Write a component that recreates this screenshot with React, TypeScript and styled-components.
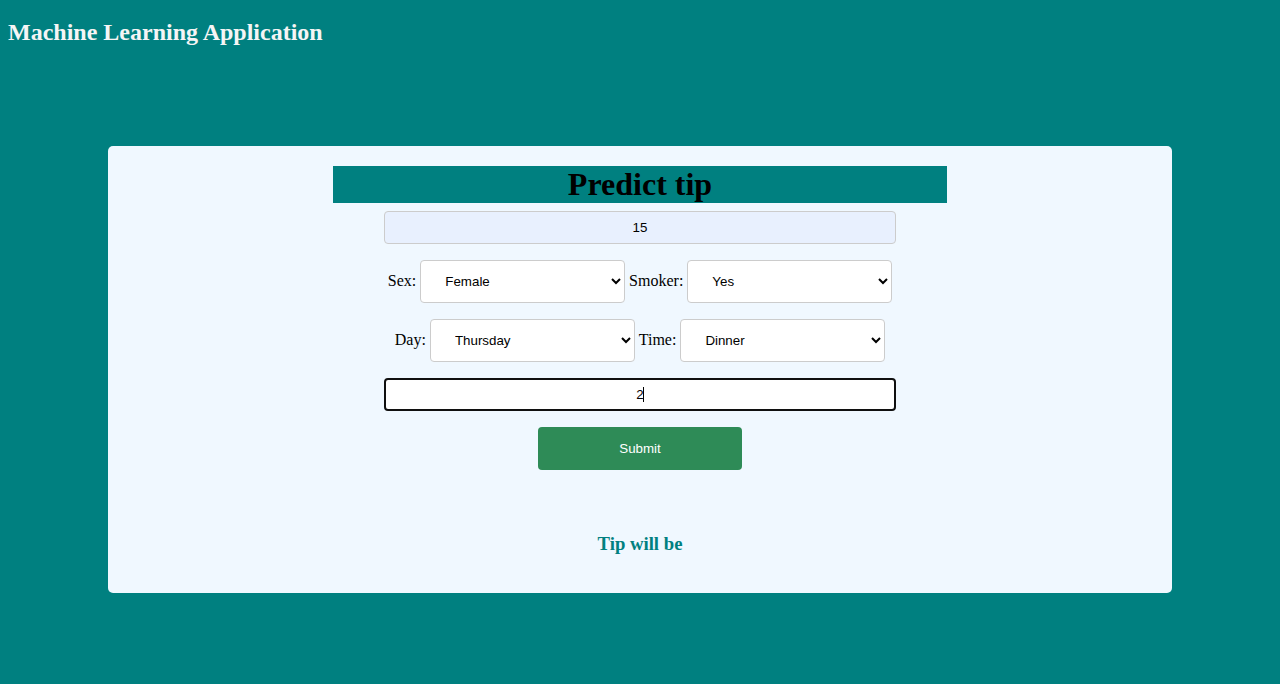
import { useState } from "react";
import styled, { createGlobalStyle, css } from "styled-components";

const GlobalStyle = createGlobalStyle`
  body {
    margin: 0;
    background: #008080;
    color: #000;
    font-family: "Liberation Serif", "Times New Roman", serif;
    font-size: 16px;
  }
`;

const Header = styled.header`
  padding: 18px 8px 0;
`;

const AppTitle = styled.h2`
  margin: 0;
  color: #f5f5f5;
  font-size: 24px;
  line-height: 28px;
`;

const Card = styled.main`
  box-sizing: border-box;
  margin: 100px 108px 0;
  padding: 20px;
  border-radius: 5px;
  background: #f0f8ff;
`;

const Form = styled.form`
  display: flex;
  flex-direction: column;
  align-items: center;
`;

const FormTitle = styled.h1`
  width: 60%;
  margin: 0;
  background: #008080;
  font-size: 32px;
  line-height: 37px;
  text-align: center;
`;

const controlFont = css`
  font-family: "Liberation Sans", Arial, sans-serif;
`;

const FieldBox = styled.div`
  position: relative;
  width: 50%;
  margin: 8px 0;
`;

const TextField = styled.input<{ $autofilled?: boolean }>`
  ${controlFont}
  display: block;
  box-sizing: border-box;
  width: 100%;
  height: 33px;
  padding: 8px;
  border: 1px solid #ccc;
  border-radius: 4px;
  background: ${(p) => (p.$autofilled ? "#e8f0fe" : "#fff")};
  color: #000;
  text-align: center;

  &:focus {
    padding: 7px;
    border: 2px solid #101010;
    outline: none;
    caret-color: transparent;
  }
`;

/* Steady caret shown after a centred single digit while its field has focus. */
const Caret = styled.span`
  display: none;
  position: absolute;
  top: 9px;
  left: calc(50% + 3px);
  width: 1px;
  height: 15px;
  background: #000;
  pointer-events: none;

  ${TextField}:focus + & {
    display: block;
  }
`;

const FieldRow = styled.div`
  display: flex;
  align-items: baseline;
  justify-content: center;
  gap: 4px;
  width: 100%;
  margin: 8px 0;
`;

const Select = styled.select`
  ${controlFont}
  box-sizing: border-box;
  width: 20%;
  height: 43px;
  padding: 12px 20px;
  border: 1px solid #ccc;
  border-radius: 4px;
  background: #fff;
  color: #000;
`;

const SubmitButton = styled.button`
  ${controlFont}
  width: 20%;
  height: 43px;
  margin: 8px 0;
  border: none;
  border-radius: 4px;
  background: #2e8b57;
  color: #fff;
  cursor: pointer;
`;

const Result = styled.h3`
  margin: 56px 0 19px;
  color: #008080;
  line-height: 20px;
  text-align: center;
`;

type ChoiceProps = { id: string; label: string; options: string[]; initial: string };

function Choice({ id, label, options, initial }: ChoiceProps) {
  return (
    <>
      <label htmlFor={id}>{label}:</label>
      <Select id={id} name={id} defaultValue={initial}>
        {options.map((option) => (
          <option key={option}>{option}</option>
        ))}
      </Select>
    </>
  );
}

export default function App() {
  const [bill, setBill] = useState("15");
  const [size, setSize] = useState("2");

  return (
    <>
      <GlobalStyle />
      <Header>
        <AppTitle>Machine Learning Application</AppTitle>
      </Header>
      <Card>
        <Form onSubmit={(e) => e.preventDefault()}>
          <FormTitle>Predict tip</FormTitle>
          <FieldBox>
            <TextField
              $autofilled
              aria-label="Total bill"
              name="total_bill"
              value={bill}
              onChange={(e) => setBill(e.target.value)}
            />
          </FieldBox>
          <FieldRow>
            <Choice id="sex" label="Sex" options={["Male", "Female"]} initial="Female" />
            <Choice id="smoker" label="Smoker" options={["Yes", "No"]} initial="Yes" />
          </FieldRow>
          <FieldRow>
            <Choice
              id="day"
              label="Day"
              options={["Thursday", "Friday", "Saturday", "Sunday"]}
              initial="Thursday"
            />
            <Choice id="time" label="Time" options={["Lunch", "Dinner"]} initial="Dinner" />
          </FieldRow>
          <FieldBox>
            <TextField
              autoFocus
              aria-label="Party size"
              name="size"
              maxLength={1}
              value={size}
              onChange={(e) => setSize(e.target.value)}
            />
            <Caret aria-hidden />
          </FieldBox>
          <SubmitButton type="submit">Submit</SubmitButton>
        </Form>
        <Result>Tip will be</Result>
      </Card>
    </>
  );
}
